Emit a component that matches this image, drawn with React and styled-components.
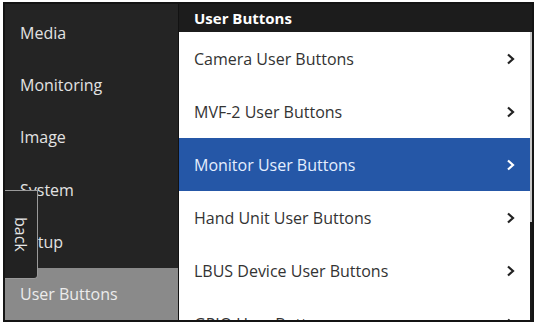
import styled, { createGlobalStyle } from 'styled-components'

const GlobalStyle = createGlobalStyle`
  html, body {
    margin: 0;
    padding: 0;
    background: #ffffff;
  }
  body {
    font-family: "Open Sans", "Noto Sans", sans-serif;
  }
`

const sideItems = ['Media', 'Monitoring', 'Image', 'System', 'Setup', 'User Buttons']
const listItems = [
  'Camera User Buttons',
  'MVF-2 User Buttons',
  'Monitor User Buttons',
  'Hand Unit User Buttons',
  'LBUS Device User Buttons',
  'GPIO User Buttons',
]

const Chevron = () => (
  <svg width="9" height="12" viewBox="0 0 9 12">
    <polyline points="2,1.5 7,6 2,10.5" fill="none" stroke="currentColor" strokeWidth="2.2" />
  </svg>
)

export default function App() {
  return (
    <>
      <GlobalStyle />
      <Page>
        <Frame>
          <Sidebar>
            {sideItems.map((s, i) => (
              <SideItem key={s} $active={i === sideItems.length - 1}>{s}</SideItem>
            ))}
            <BackTab>back</BackTab>
          </Sidebar>
          <Panel>
            <PanelHeader>User Buttons</PanelHeader>
            <PanelBody>
              <List>
                {listItems.map((s, i) => (
                  <Row key={s} $selected={i === 2}>
                    <span>{s}</span>
                    <Chevron />
                  </Row>
                ))}
              </List>
              <Scrollbar>
                <Thumb />
              </Scrollbar>
            </PanelBody>
          </Panel>
        </Frame>
      </Page>
    </>
  )
}

const Page = styled.div`
  width: 538px;
  height: 328px;
  padding: 2px 0 0 3px;
  box-sizing: border-box;
`

const Frame = styled.div`
  width: 531px;
  height: 320px;
  border: 2px solid #141414;
  box-sizing: border-box;
  display: flex;
  overflow: hidden;
  background: #232323;
`

const Sidebar = styled.div`
  position: relative;
  width: 173px;
  display: flex;
  flex-direction: column;
  padding-top: 3px;
  background: #242424;
`

const SideItem = styled.div`
  flex: 1;
  display: flex;
  align-items: center;
  padding-left: 15px;
  font-size: 16px;
  color: ${p => (p.$active ? '#ececec' : '#e2e2e2')};
  background: ${p => (p.$active ? '#8a8a8a' : 'transparent')};
`

const BackTab = styled.div`
  position: absolute;
  left: 0;
  top: 186px;
  width: 33px;
  height: 89px;
  box-sizing: border-box;
  background: #222222;
  border-top: 1px solid #9a9a9a;
  border-right: 1px solid #9a9a9a;
  border-bottom: 1px solid #9a9a9a;
  border-bottom-right-radius: 4px;
  writing-mode: vertical-rl;
  display: flex;
  align-items: center;
  justify-content: center;
  font-size: 16px;
  color: #e6e6e6;
`

const Panel = styled.div`
  flex: 1;
  display: flex;
  flex-direction: column;
  border-left: 1px solid #121212;
  min-width: 0;
`

const PanelHeader = styled.div`
  height: 28px;
  flex-shrink: 0;
  display: flex;
  align-items: center;
  padding-left: 15px;
  background: #1c1c1c;
  color: #ffffff;
  font-weight: 700;
  font-size: 15px;
`

const PanelBody = styled.div`
  flex: 1;
  display: flex;
  min-height: 0;
`

const List = styled.div`
  flex: 1;
  background: #ffffff;
  overflow: hidden;
`

const Row = styled.div`
  height: 53px;
  display: flex;
  align-items: center;
  justify-content: space-between;
  padding: 0 15px;
  font-size: 16px;
  background: ${p => (p.$selected ? '#2557a7' : '#ffffff')};
  color: ${p => (p.$selected ? '#e4eeff' : '#333333')};
  svg {
    color: ${p => (p.$selected ? '#ffffff' : '#222222')};
  }
`

const Scrollbar = styled.div`
  width: 2px;
  background: #1a1a1a;
`

const Thumb = styled.div`
  height: 190px;
  background: #c9c9c9;
`
